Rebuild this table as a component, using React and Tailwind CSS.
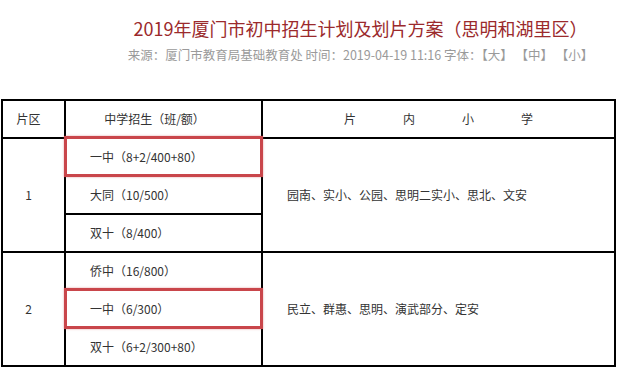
const rows = [
  {
    zone: "1",
    schools: [
      { name: "一中（8+2/400+80）", marked: true },
      { name: "大同（10/500）" },
      { name: "双十（8/400）" },
    ],
    primary: "园南、实小、公园、思明二实小、思北、文安",
  },
  {
    zone: "2",
    schools: [
      { name: "侨中（16/800）" },
      { name: "一中（6/300）", marked: true },
      { name: "双十（6+2/300+80）" },
    ],
    primary: "民立、群惠、思明、演武部分、定安",
  },
];

function Mark() {
  return (
    <div className="pointer-events-none absolute -top-[3px] -left-[2px] -right-[2px] -bottom-[2px] border-[3px] border-[#c9464b] shadow-[0_0_2px_rgba(201,70,75,0.5)]" />
  );
}

export default function App() {
  return (
    <div
      className="w-[621px] h-[368px] overflow-hidden bg-white"
      style={{ fontFamily: '"Noto Sans CJK SC", "Noto Sans", sans-serif' }}
    >
      <div className="pl-[100px] pt-[17px] text-center">
        <h1 className="text-[18px] leading-[22px] font-normal text-[#9b2a2c]">
          2019年厦门市初中招生计划及划片方案（思明和湖里区）
        </h1>
        <p className="mt-[7px] text-[12.5px] leading-[18px] text-[#9a9a9a]">
          来源：厦门市教育局基础教育处 时间：2019-04-19 11:16 字体：【大】 【中】 【小】
        </p>
      </div>

      <table className="mt-[35px] ml-[1px] w-[615px] table-fixed border-collapse text-[12px] text-[#333]">
        <colgroup>
          <col className="w-[63px]" />
          <col className="w-[197px]" />
          <col />
        </colgroup>
        <thead>
          <tr className="h-[38px]">
            <th className="border-2 border-black pr-[10px] text-center font-normal">片区</th>
            <th className="border-2 border-black pr-[18px] text-center font-normal">中学招生（班/额）</th>
            <th className="border-2 border-black font-normal">
              <div className="flex justify-center gap-[47px]">
                <span>片</span>
                <span>内</span>
                <span>小</span>
                <span>学</span>
              </div>
            </th>
          </tr>
        </thead>
        <tbody>
          {rows.map((group) =>
            group.schools.map((school, i) => (
              <tr key={group.zone + i} className="h-[38px]">
                {i === 0 && (
                  <td rowSpan={3} className="border-2 border-black pr-[10px] text-center">
                    {group.zone}
                  </td>
                )}
                <td className="relative border-2 border-black pl-[24px]">
                  {school.name}
                  {school.marked && <Mark />}
                </td>
                {i === 0 && (
                  <td rowSpan={3} className="border-2 border-black pl-[24px]">
                    {group.primary}
                  </td>
                )}
              </tr>
            ))
          )}
        </tbody>
      </table>
    </div>
  );
}
